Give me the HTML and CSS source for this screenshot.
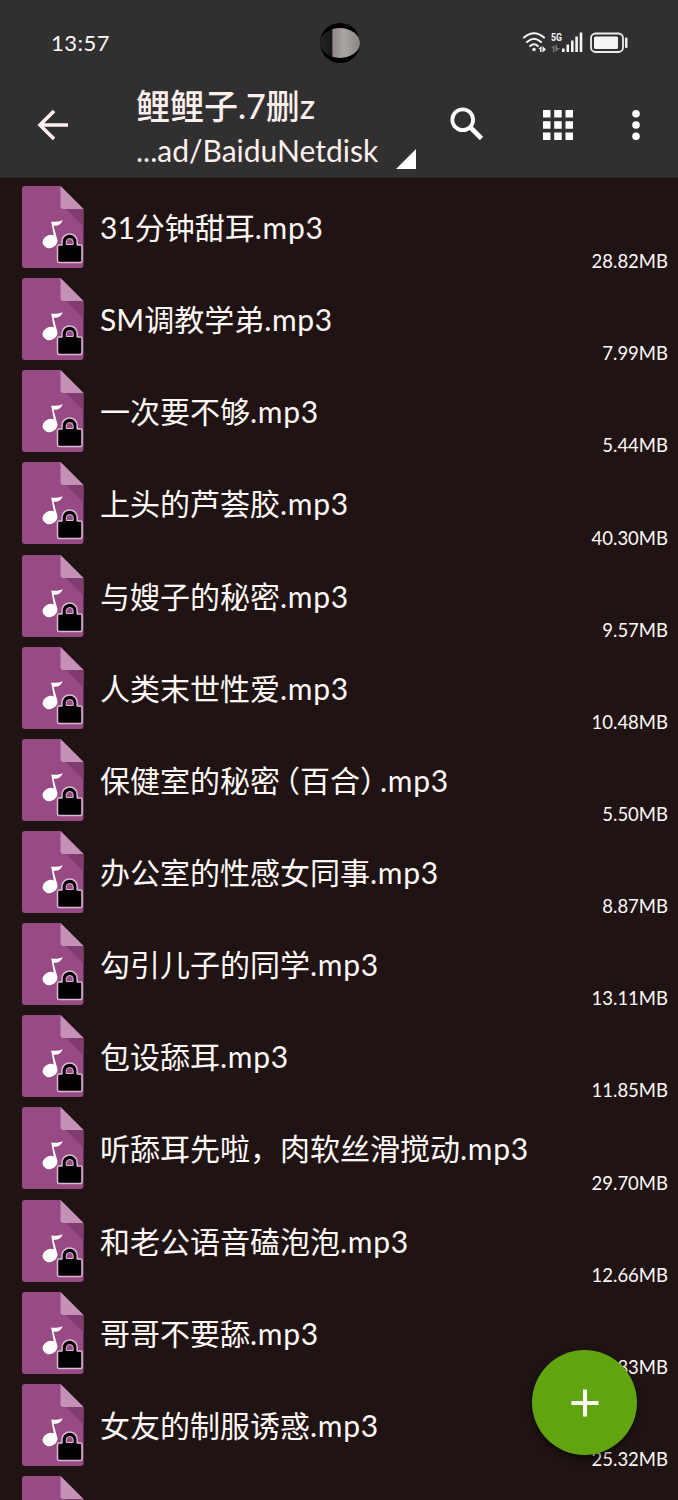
FILE: index.html
```
<!DOCTYPE html>
<html lang="zh-CN">
<head>
<meta charset="utf-8">
<title>BaiduNetdisk</title>
<link rel="stylesheet" href="styles.css">
</head>
<body>
<svg class="defs" width="0" height="0">
  <symbol id="file" viewBox="0 0 62 83">
    <path fill="#984a84" d="M3 0H38.5L61.500 23V79a3 3 0 0 1-3 3H3a3 3 0 0 1-3-3V3a3 3 0 0 1 3-3z"/>
    <path fill="#c492b6" d="M38.500 0 61.500 23H41.500a3 3 0 0 1-3-3z"/>
    <path fill="#803c6f" d="M44 23H61.500V40.500z"/>
    <ellipse cx="28" cy="55.500" rx="7.500" ry="6.500" fill="#fff" transform="rotate(-20 28 55.500)"/>
    <path fill="#fff" d="M29.200 35.500c3 .8 7 .2 11.500-1.200-1.500 3.500-3.500 5.700-9.200 5.500L35.500 54.500 33 56z"/>
    <path fill="#000" stroke="#dcb9d4" stroke-width="1.500" stroke-linejoin="round" d="M37 59H40V55.500a7.600 7.600 0 0 1 15.200 0V59H58.500a1.500 1.500 0 0 1 1.500 1.500V75a1.500 1.500 0 0 1-1.500 1.500H37a1.500 1.500 0 0 1-1.500-1.500V60.500A1.500 1.500 0 0 1 37 59z"/>
    <path fill="#984a84" stroke="#dcb9d4" d="M44.200 58.500V56a3.500 3.500 0 0 1 7 0V58.500z"/>
  </symbol>
</svg>
<div class="screen">
  <header class="top">
    <div class="status">
      <span class="clock">13:57</span>
      <span class="camera"></span>
      <svg class="signals" width="108" height="24" viewBox="0 0 108 24">
        <g fill="none" stroke="#f4f4f4" stroke-width="2.100" stroke-linecap="round">
          <path d="M2 6.500Q12 -2 22 6.500M5 11Q12 4.500 19 11M8.200 15Q12 11.500 15.800 15"/>
        </g>
        <circle cx="12" cy="18.500" r="1.800" fill="#f4f4f4"/>
        <path fill="#f4f4f4" d="M16.200 18 19.500 15V21H18V18zM20.500 15 24 18.500 20.500 21.500z"/>
        <text class="net" x="29" y="10" textLength="11" lengthAdjust="spacingAndGlyphs">5G</text>
        <path fill="#777" d="M29 17 32.500 14V21H31V17zM33.500 14H35V17H38L33.500 21z"/>
        <path fill="#f4f4f4" d="M40 17.500h2.600V21H40zM44.500 13.500h2.600V21h-2.600zM49 9.500h2.600V21H49zM53.300 5.500h2.600V21h-2.600zM57.700 1.500h2.600V21h-2.600z"/>
        <rect x="69" y="2.500" width="32" height="18.500" rx="4.500" fill="none" stroke="#eee" stroke-width="1.800"/>
        <rect x="72" y="5.500" width="24" height="12.500" rx="1.500" fill="#f4f4f4"/>
        <rect x="103" y="6.500" width="2.500" height="10.500" rx="1" fill="#eee"/>
      </svg>
    </div>
    <div class="bar">
      <svg class="back" width="32" height="32" viewBox="0 0 32 32"><path fill="none" stroke="#fff0ee" stroke-width="3.600" d="M31 16H3M17 2 3 16 17 30"/></svg>
      <div class="titles">
        <h1 class="title">鲤鲤子.7删z</h1>
        <div class="path"><span class="crumb">...ad/BaiduNetdisk</span><svg class="corner" width="20" height="20" viewBox="0 0 20 20"><path fill="#fff" d="M20 0V20H0z"/></svg></div>
      </div>
      <svg class="search" width="34" height="34" viewBox="0 0 34 34"><circle cx="12.700" cy="12.700" r="10.400" fill="none" stroke="#fff" stroke-width="3.800"/><path stroke="#fff" stroke-width="4.600" d="M20 20 31.500 31.500"/></svg>
      <svg class="grid" width="30" height="30" viewBox="0 0 30 30"><path fill="#fff" d="M0 0h7.500v7.500H0zM11.200 0h7.500v7.500h-7.500zM22.500 0H30v7.500h-7.500zM0 11.200h7.500v7.500H0zM11.200 11.200h7.500v7.500h-7.500zM22.500 11.200H30v7.500h-7.500zM0 22.500h7.500V30H0zM11.200 22.500h7.500V30h-7.500zM22.500 22.500H30V30h-7.500z"/></svg>
      <svg class="more" width="8" height="30" viewBox="0 0 8 30"><g fill="#fff"><circle cx="4" cy="3.800" r="3.800"/><circle cx="4" cy="15" r="3.800"/><circle cx="4" cy="26.200" r="3.800"/></g></svg>
    </div>
  </header>
  <main class="list">
    <div class="row"><svg class="icon"><use href="#file"/></svg><span class="name">31分钟甜耳<span class="ext">.mp3</span></span><span class="size">28.82MB</span></div>
    <div class="row"><svg class="icon"><use href="#file"/></svg><span class="name">SM调教学弟<span class="ext">.mp3</span></span><span class="size">7.99MB</span></div>
    <div class="row"><svg class="icon"><use href="#file"/></svg><span class="name">一次要不够<span class="ext">.mp3</span></span><span class="size">5.44MB</span></div>
    <div class="row"><svg class="icon"><use href="#file"/></svg><span class="name">上头的芦荟胶<span class="ext">.mp3</span></span><span class="size">40.30MB</span></div>
    <div class="row"><svg class="icon"><use href="#file"/></svg><span class="name">与嫂子的秘密<span class="ext">.mp3</span></span><span class="size">9.57MB</span></div>
    <div class="row"><svg class="icon"><use href="#file"/></svg><span class="name">人类末世性爱<span class="ext">.mp3</span></span><span class="size">10.48MB</span></div>
    <div class="row"><svg class="icon"><use href="#file"/></svg><span class="name">保健室的秘密<span class="open">（</span>百合<span class="close">）</span><span class="ext">.mp3</span></span><span class="size">5.50MB</span></div>
    <div class="row"><svg class="icon"><use href="#file"/></svg><span class="name">办公室的性感女同事<span class="ext">.mp3</span></span><span class="size">8.87MB</span></div>
    <div class="row"><svg class="icon"><use href="#file"/></svg><span class="name">勾引儿子的同学<span class="ext">.mp3</span></span><span class="size">13.11MB</span></div>
    <div class="row"><svg class="icon"><use href="#file"/></svg><span class="name">包设舔耳<span class="ext">.mp3</span></span><span class="size">11.85MB</span></div>
    <div class="row"><svg class="icon"><use href="#file"/></svg><span class="name">听舔耳先啦，肉软丝滑搅动<span class="ext">.mp3</span></span><span class="size">29.70MB</span></div>
    <div class="row"><svg class="icon"><use href="#file"/></svg><span class="name">和老公语音磕泡泡<span class="ext">.mp3</span></span><span class="size">12.66MB</span></div>
    <div class="row"><svg class="icon"><use href="#file"/></svg><span class="name">哥哥不要舔<span class="ext">.mp3</span></span><span class="size">83MB</span></div>
    <div class="row"><svg class="icon"><use href="#file"/></svg><span class="name">女友的制服诱惑<span class="ext">.mp3</span></span><span class="size">25.32MB</span></div>
    <div class="row"><svg class="icon"><use href="#file"/></svg></div>
  </main>
  <button class="fab" aria-label="添加"><svg width="28" height="28" viewBox="0 0 28 28"><path stroke="#fff" stroke-width="4" d="M14 .5V27.500M.5 14H27.500"/></svg></button>
</div>
</body>
</html>
```
FILE: styles.css
```
* { box-sizing: border-box; }
body { margin: 0; background: #1f1413; }
.defs { position: absolute; }
.screen {
  position: relative;
  width: 678px;
  height: 1500px;
  overflow: hidden;
  background: #1f1413;
  color: #fff8f6;
  font-family: Lato, "Noto Sans CJK SC", sans-serif;
  display: flex;
  flex-direction: column;
}
.top { flex: none; height: 178px; background: #303030; border-bottom: 1px solid #271e1d; }
.status { height: 85px; padding: 0 48px 0 51px; display: flex; align-items: center; }
.clock { width: 269px; font-size: 22px; line-height: 26px; letter-spacing: .5px; font-family: Lato, sans-serif; }
.camera {
  width: 40px;
  height: 40px;
  border-radius: 50%;
  border-top: 5px solid #000;
  border-bottom: 5px solid #000;
  background: linear-gradient(90deg, #252525 0, #171717 30%, #8f8a89 32%, #aaa4a3 60%, #8b8685 100%);
}
.signals { margin-left: 162px; flex: none; }
.net { font: bold 11px Roboto, sans-serif; fill: #f4f4f4; }
.bar { height: 92px; display: flex; align-items: flex-start; }
.back { margin: 24px 0 0 37px; flex: none; }
.titles { width: 290px; margin-left: 67px; flex: none; color: #ffefed; }
.title { margin: 0; height: 42px; line-height: 42px; font-size: 34px; font-weight: 500; white-space: nowrap; }
.path { display: flex; height: 43px; line-height: 47px; }
.crumb { width: 260px; font-size: 30px; white-space: nowrap; }
.corner { margin-top: 22px; flex: none; }
.search { margin: 22px 0 0 24px; flex: none; }
.grid { margin: 25px 0 0 59px; flex: none; }
.more { margin: 25px 0 0 59px; flex: none; }
.list { flex: none; }
.row { height: 92.150px; padding: 8px 10px 0 21.500px; display: flex; }
.icon { width: 62px; height: 83px; flex: none; }
.name { margin-left: 16.500px; flex: 1; font-size: 30px; line-height: 82px; white-space: nowrap; }
.ext { letter-spacing: .7px; }
.open { margin-left: -10px; }
.close { margin-right: -10px; }
.size { align-self: flex-end; font-size: 18.500px; line-height: 22px; margin-bottom: -2px; }
.fab {
  position: absolute;
  left: 532px;
  top: 1350px;
  width: 105px;
  height: 105px;
  border: 0;
  padding: 0;
  border-radius: 50%;
  background: #60a510;
  box-shadow: 0 4px 7px rgba(0, 0, 0, .5);
  display: flex;
  align-items: center;
  justify-content: center;
}
```
